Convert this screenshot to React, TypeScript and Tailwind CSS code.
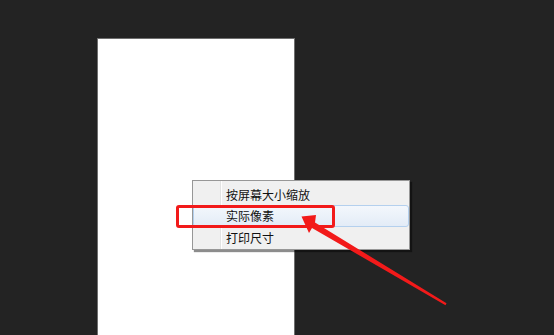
export default function App() {
  const items = ["按屏幕大小缩放", "实际像素", "打印尺寸"];
  return (
    <div className="relative w-[554px] h-[335px] overflow-hidden bg-[#232323] pt-[38px] pl-[97px] font-['Noto_Sans_CJK_SC','Noto_Sans',sans-serif]">
      {/* Document page */}
      <div className="w-[198px] h-[297px] bg-white border border-b-0 border-[#6e6e6e]" />

      {/* Context menu */}
      <div className="absolute left-[192px] top-[180px] w-[218px] h-[70px] bg-[#f0f0f0] border border-[#979797] pt-[3px] shadow-[2px_2px_1px_rgba(0,0,0,0.45)]">
        <div className="absolute left-[27px] top-0 bottom-0 w-[2px] border-l border-[#e2e3e3] border-r border-r-white" />
        {items.map((item, i) => (
          <div
            key={item}
            className={
              "relative flex items-center text-[12px] leading-none text-[#111] " +
              (i === 1
                ? "h-[22px] rounded-[3px] border border-[#b4d0ee] bg-gradient-to-b from-[#f3f7fc] to-[#e3ecf7] pl-[32px]"
                : "h-[21px] pl-[33px]")
            }
          >
            {item}
          </div>
        ))}
      </div>

      {/* Red highlight box */}
      <div className="absolute left-[176px] top-[205px] w-[159px] h-[23px] rounded-[3px] border-[3px] border-[#f21a1a]" />

      {/* Red arrow */}
      <svg className="absolute left-0 top-0 pointer-events-none" width="554" height="335" viewBox="0 0 554 335">
        <polygon
          points="301.5,216.5 316,215 315,222.5 446.5,303.3 445.5,305.2 312,228 309,233"
          fill="#f21a1a"
        />
      </svg>
    </div>
  );
}
